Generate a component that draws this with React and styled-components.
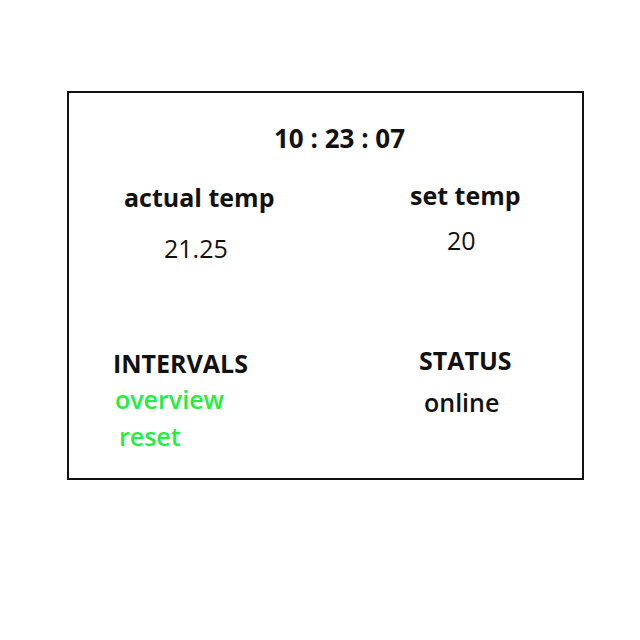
import React from "react";
import styled, { createGlobalStyle } from "styled-components";

const GlobalStyle = createGlobalStyle`
  body {
    margin: 0;
    background: #fff;
    font-family: "Open Sans", "Noto Sans", sans-serif;
    color: #111;
  }
`;

const Panel = styled.div`
  box-sizing: border-box;
  margin: 91px 0 0 67px;
  width: 517px;
  height: 389px;
  border: 2px solid #111;
  padding-top: 32px;
`;

const Clock = styled.div`
  margin-left: 205px;
  font-size: 26px;
  font-weight: 700;
  line-height: 1;
`;

const Grid = styled.div`
  display: grid;
  grid-template-columns: 296px 1fr;
  align-items: start;
`;

const Block = styled.div`
  display: flex;
  flex-direction: column;
  align-items: flex-start;
  margin-top: ${(p) => p.$top}px;
`;

const Label = styled.div`
  margin-left: ${(p) => p.$indent}px;
  font-size: 25px;
  font-weight: 700;
  line-height: 1;
`;

const Value = styled.div`
  margin: ${(p) => p.$gap}px 0 0 ${(p) => p.$indent}px;
  font-size: 25px;
  font-weight: ${(p) => (p.$strong ? 600 : 400)};
  line-height: 1;
  color: ${(p) => (p.$link ? "#1ef03c" : "#111")};
  cursor: ${(p) => (p.$link ? "pointer" : "default")};
`;

export default function App() {
  return (
    <>
      <GlobalStyle />
      <Panel>
        <Clock>10 : 23 : 07</Clock>
        <Grid>
          <Block $top={34}>
            <Label $indent={55}>actual temp</Label>
            <Value $indent={95} $gap={26}>21.25</Value>
          </Block>
          <Block $top={32}>
            <Label $indent={45}>set temp</Label>
            <Value $indent={82} $gap={20}>20</Value>
          </Block>
          <Block $top={90}>
            <Label $indent={44}>INTERVALS</Label>
            <Value $link $strong $indent={46} $gap={11}>overview</Value>
            <Value $link $strong $indent={50} $gap={12}>reset</Value>
          </Block>
          <Block $top={87}>
            <Label $indent={54}>STATUS</Label>
            <Value $strong $indent={59} $gap={17}>online</Value>
          </Block>
        </Grid>
      </Panel>
    </>
  );
}
